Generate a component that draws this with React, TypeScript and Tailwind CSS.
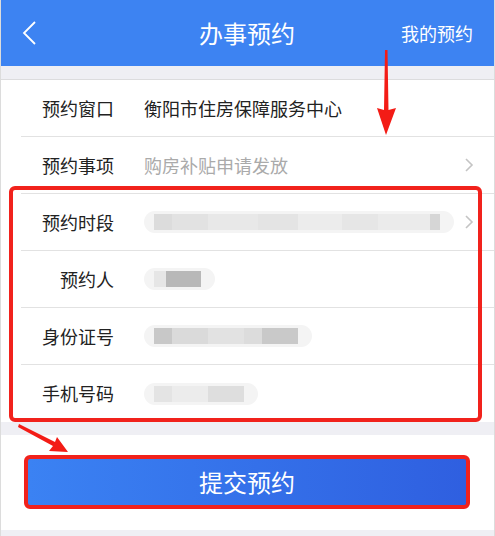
import React from 'react';

const Chevron = () => (
    <svg width="10" height="16" viewBox="0 0 10 16" className="shrink-0">
        <path d="M2 2l6 6-6 6" fill="none" stroke="#c4c4c4" strokeWidth="1.6" />
    </svg>
);

const Blur = ({ blocks }: { blocks: { w: number; c: string }[] }) => (
    <div className="flex items-center h-[22px] rounded-full bg-[#f4f4f4] pl-[10px] pr-[14px] blur-[0.6px]">
        {blocks.map((b, i) => (
            <div key={i} className="h-[16px]" style={{ width: b.w, background: b.c }} />
        ))}
    </div>
);

const rows = [
    { label: '预约窗口', value: <span className="text-[#222]">衡阳市住房保障服务中心</span> },
    { label: '预约事项', value: <span className="text-[#aaaaaa]">购房补贴申请发放</span>, arrow: true },
    {
        label: '预约时段',
        value: <Blur blocks={[{ w: 18, c: '#dcdcdc' }, { w: 36, c: '#e2e2e2' }, { w: 50, c: '#e8e8e8' }, { w: 40, c: '#e4e4e4' }, { w: 44, c: '#ececec' }, { w: 36, c: '#e6e6e6' }, { w: 52, c: '#ebebeb' }, { w: 10, c: '#d6d6d6' }]} />,
        arrow: true,
    },
    { label: '预约人', value: <Blur blocks={[{ w: 12, c: '#e6e6e6' }, { w: 35, c: '#b8b8b8' }]} /> },
    { label: '身份证号', value: <Blur blocks={[{ w: 18, c: '#c8c8c8' }, { w: 36, c: '#dadada' }, { w: 36, c: '#e2e2e2' }, { w: 18, c: '#dcdcdc' }, { w: 36, c: '#c9c9c9' }]} /> },
    { label: '手机号码', value: <Blur blocks={[{ w: 18, c: '#e4e4e4' }, { w: 36, c: '#ececec' }, { w: 36, c: '#dedede' }]} /> },
];

export default function App() {
    return (
        <div className="relative w-[495px] h-[536px] overflow-hidden bg-[#efeff4] font-['Noto_Sans_CJK_SC','Noto_Sans',sans-serif] border-x border-[#dcdcdc]">
            <div className="h-[66px] bg-[#3d83f2] flex items-center justify-between pl-[20px] pr-[21px] text-white">
                <svg width="18" height="24" viewBox="0 0 18 24">
                    <path d="M14 1L3 12l11 11" fill="none" stroke="#fff" strokeWidth="1.8" />
                </svg>
                <span className="text-[24px] pl-[54px]">办事预约</span>
                <span className="text-[18px]">我的预约</span>
            </div>
            <div className="h-[14px] border-b border-[#dcdcde]" />

            <div className="bg-white">
                {rows.map((r, i) => (
                    <div key={r.label} className={`ml-[20px] h-[57px] flex items-center pr-[20px] ${i < rows.length - 1 ? 'border-b border-[#e2e2e2]' : ''}`}>
                        <span className="w-[93px] text-right text-[18px] text-[#222] shrink-0">{r.label}</span>
                        <div className="ml-[30px] flex-1 text-[18px] flex items-center">{r.value}</div>
                        {r.arrow && <Chevron />}
                    </div>
                ))}
            </div>

            <div className="h-[13px]" />
            <div className="bg-white h-[95px] pt-[20px]">
                <button className="mx-[23px] w-[446px] h-[54px] rounded-[6px] border-[4px] border-[#f1221c] bg-gradient-to-r from-[#3b82f3] to-[#2f5fe0] text-white text-[24px]">
                    提交预约
                </button>
            </div>

            <div className="absolute left-[8px] top-[186px] w-[473px] h-[236px] border-[4px] border-[#f1221c] rounded-[6px] pointer-events-none" />

            <svg className="absolute left-0 top-0 pointer-events-none" width="495" height="536" viewBox="0 0 495 536">
                <polygon points="384,50 386.5,50 387.5,110 395,108 385,135 376,108 383,110" fill="#f31c16" />
                <polygon points="18,424 54,442 56,437 67,452 48,451 52,446 17,427" fill="#f31c16" />
            </svg>
        </div>
    );
}
